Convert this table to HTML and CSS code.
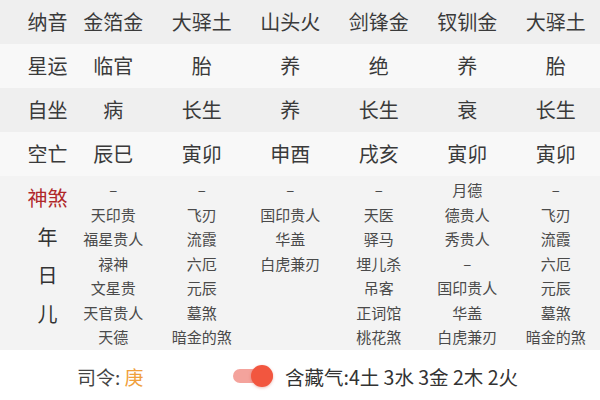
FILE: index.html
```html
<!DOCTYPE html>
<html lang="zh">
<head>
<meta charset="utf-8">
<link rel="stylesheet" href="styles.css">
</head>
<body>
<div class="table">
  <div class="row row-a">
    <div class="label">纳音</div>
    <div class="cell">金箔金</div><div class="cell">大驿土</div><div class="cell">山头火</div>
    <div class="cell">剑锋金</div><div class="cell">钗钏金</div><div class="cell">大驿土</div>
  </div>
  <div class="row row-b">
    <div class="label">星运</div>
    <div class="cell">临官</div><div class="cell">胎</div><div class="cell">养</div>
    <div class="cell">绝</div><div class="cell">养</div><div class="cell">胎</div>
  </div>
  <div class="row row-a">
    <div class="label">自坐</div>
    <div class="cell">病</div><div class="cell">长生</div><div class="cell">养</div>
    <div class="cell">长生</div><div class="cell">衰</div><div class="cell">长生</div>
  </div>
  <div class="row row-b">
    <div class="label">空亡</div>
    <div class="cell">辰巳</div><div class="cell">寅卯</div><div class="cell">申酉</div>
    <div class="cell">戌亥</div><div class="cell">寅卯</div><div class="cell">寅卯</div>
  </div>
  <div class="row shensha">
    <div class="label ss-label">
      <span class="ss-title">神煞</span>
      <span>年</span><span>日</span><span>儿</span>
    </div>
    <div class="ss-col"><span>–</span><span>天印贵</span><span>福星贵人</span><span>禄神</span><span>文星贵</span><span>天官贵人</span><span>天德</span></div>
    <div class="ss-col"><span>–</span><span>飞刃</span><span>流霞</span><span>六厄</span><span>元辰</span><span>墓煞</span><span>暗金的煞</span></div>
    <div class="ss-col"><span>–</span><span>国印贵人</span><span>华盖</span><span>白虎兼刃</span></div>
    <div class="ss-col"><span>–</span><span>天医</span><span>驿马</span><span>埋儿杀</span><span>吊客</span><span>正词馆</span><span>桃花煞</span></div>
    <div class="ss-col"><span>月德</span><span>德贵人</span><span>秀贵人</span><span>–</span><span>国印贵人</span><span>华盖</span><span>白虎兼刃</span></div>
    <div class="ss-col"><span>–</span><span>飞刃</span><span>流霞</span><span>六厄</span><span>元辰</span><span>墓煞</span><span>暗金的煞</span></div>
  </div>
</div>
<div class="footer">
  <div class="siling">司令: <span class="geng">庚</span></div>
  <div class="toggle"><span class="knob"></span></div>
  <div class="hidden-qi">含藏气:4土 3水 3金 2木 2火</div>
</div>
</body>
</html>
```

FILE: styles.css
```css
* { box-sizing: border-box; }
html, body {
  margin: 0;
  padding: 0;
  background: #ffffff;
  width: 600px;
  height: 400px;
  overflow: hidden;
  font-family: "Noto Sans CJK SC", "Noto Sans", sans-serif;
  color: #3a3a3a;
}
.table {
  display: flex;
  flex-direction: column;
}
.row {
  display: grid;
  grid-template-columns: 69px repeat(6, 1fr);
  align-items: center;
  height: 44px;
  font-size: 20px;
}
.row-a { background: #efefef; }
.row-b { background: #f8f8f8; }
.label {
  padding-left: 26px;
  text-align: center;
  line-height: 1;
}
.cell {
  text-align: center;
  line-height: 1;
}
.shensha {
  height: 174px;
  background: #f3f3f3;
  align-items: start;
}
.ss-label {
  display: flex;
  flex-direction: column;
  align-items: center;
  padding-top: 3px;
  font-size: 20px;
  line-height: 38.5px;
  color: #333;
}
.ss-title { color: #b0282a; }
.ss-col {
  display: flex;
  flex-direction: column;
  align-items: center;
  padding-top: 2px;
  font-size: 15px;
  line-height: 24.5px;
  color: #4a4a4a;
}
.ss-col span:first-child { letter-spacing: 0; }
.footer {
  display: flex;
  align-items: center;
  height: 50px;
  padding: 2px 0 0 77px;
}
.siling {
  font-size: 19px;
  color: #444;
  width: 156px;
}
.geng { color: #f0a03c; }
.toggle {
  position: relative;
  width: 40px;
  height: 14px;
  border-radius: 7px;
  background: #f4a39c;
  margin-right: 12px;
}
.knob {
  position: absolute;
  right: 0;
  top: -4px;
  width: 22px;
  height: 22px;
  border-radius: 50%;
  background: #f2563f;
  box-shadow: 0 1px 3px rgba(200, 60, 40, 0.35);
}
.hidden-qi {
  font-size: 19.5px;
  color: #333;
}
```
